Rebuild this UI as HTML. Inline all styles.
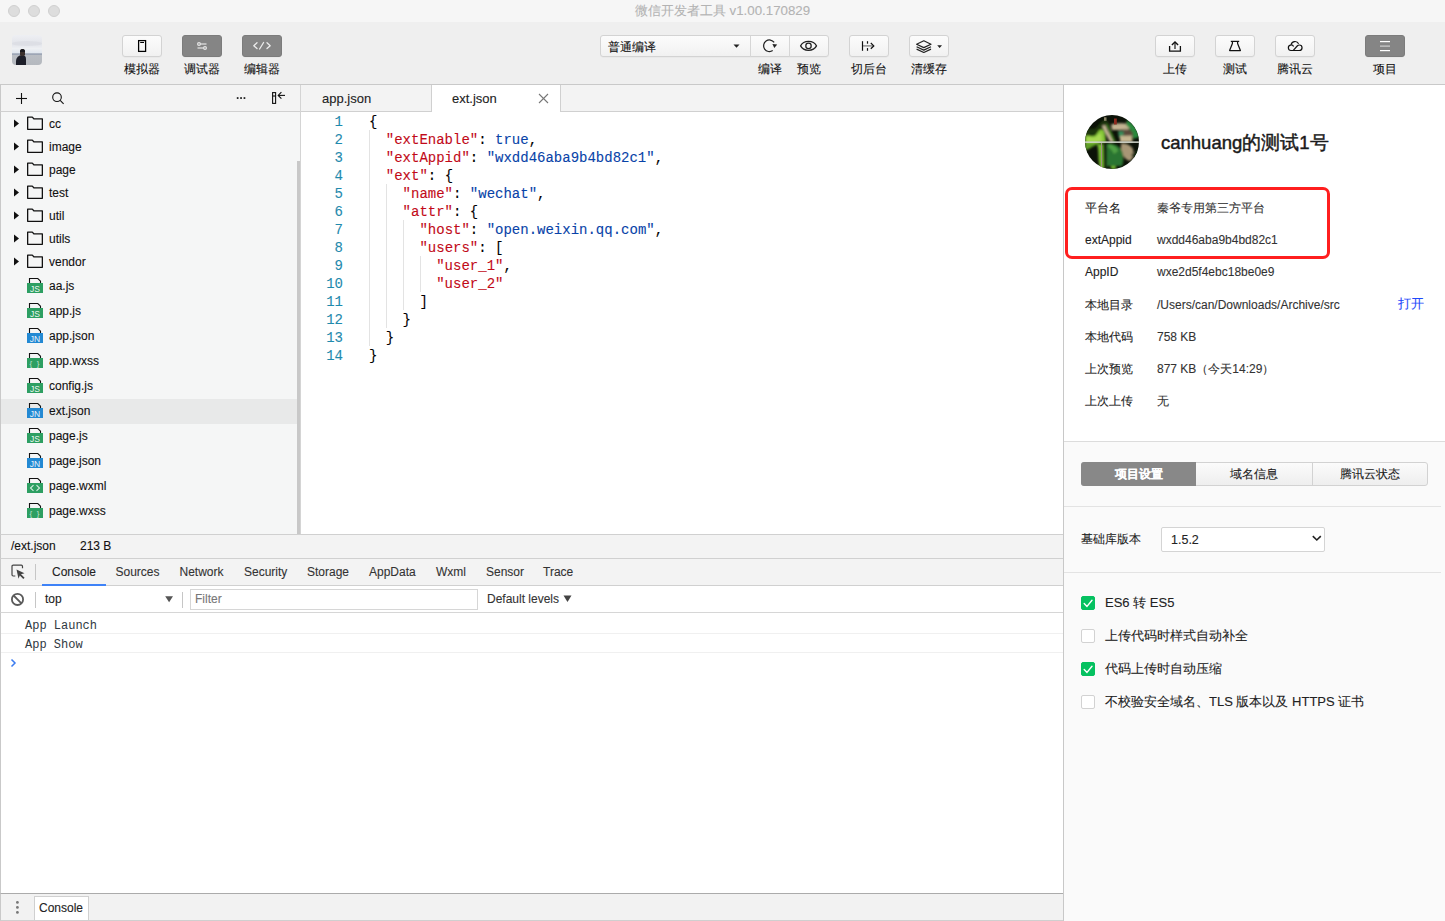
<!DOCTYPE html>
<html><head><meta charset="utf-8">
<style>
*{box-sizing:border-box;margin:0;padding:0}
body{-webkit-text-stroke-width:0.1px}
html,body{width:1445px;height:921px;overflow:hidden;background:#efefef;font-family:"Liberation Sans",sans-serif;color:#222;position:relative}
.a{position:absolute}
#title{left:0;top:0;width:1445px;height:22px;background:#f6f6f6}
.tl{top:5px;width:12px;height:12px;border-radius:50%;background:#dddddd;border:1px solid #d0d0d0}
#ttext{left:0;width:1445px;top:3px;text-align:center;font-size:13.3px;color:#b3b3b3;line-height:16px}
#toolbar{left:0;top:22px;width:1445px;height:63px;background:#efefef;border-bottom:1px solid #c9c9c9}
.btn{top:35px;width:40px;height:22px;border-radius:3px;background:linear-gradient(#fcfcfc,#f1f1f1);border:1px solid #d3d3d3;box-shadow:0 0.5px 0 rgba(0,0,0,.05)}
.btn.dk{background:#858585;border-color:#7c7c7c}
.lbl{top:62px;width:60px;text-align:center;font-size:12px;line-height:14px;color:#111}
#side{left:0;top:85px;width:300px;height:449px;background:#f5f6f6;border-left:1px solid #c9c9c9}
#sidehead{left:0;top:85px;width:300px;height:27px;background:#f3f3f3;border-bottom:1px solid #d0d0d0;border-left:1px solid #c9c9c9}
#editor{left:300px;top:85px;width:763px;height:449px;background:#fff;border-left:1px solid #d4d4d4}
#tabs{left:301px;top:85px;width:762px;height:27px;background:#f3f3f3;border-bottom:1px solid #d0d0d0}
.row{left:1px;width:296px;height:23px;font-size:12.5px;line-height:23px;color:#222}
.tx{font-size:12px;line-height:15px;color:#111;white-space:nowrap}
.dt{top:565px;font-size:12px;line-height:14px;color:#333;white-space:nowrap}
.ctx{font-size:12px;line-height:14px;white-space:nowrap}
.msg{font-family:"Liberation Mono",monospace;font-size:12px;line-height:14px;color:#303942;white-space:pre;-webkit-text-stroke-width:0}
.seg{top:466px;font-size:12px;line-height:16px;text-align:center;color:#222}
.frow{left:1px;width:296px;height:25px;font-size:12.5px;line-height:25px;color:#222}
.code{left:301px;top:113px;width:762px;font-family:"Liberation Mono",monospace;font-size:14px;line-height:18px}
.ln{position:absolute;left:0;width:42px;text-align:right;color:#1f8aad}
.cl{position:absolute;left:68px;white-space:pre;color:#000}
.k{color:#c20a18}.s{color:#0843a8}.b{color:#0843a8}
#status{left:0;top:534px;width:1063px;height:24px;background:#f3f3f3;border-top:1px solid #d0d0d0;border-left:1px solid #c9c9c9;font-size:12px}
#dtabs{left:0;top:558px;width:1063px;height:28px;background:#f3f3f3;border-top:1px solid #d0d0d0;border-bottom:1px solid #d0d0d0;border-left:1px solid #c9c9c9;font-size:12px;color:#333}
#ctool{left:0;top:586px;width:1063px;height:27px;background:#fff;border-bottom:1px solid #d6d6d6;border-left:1px solid #c9c9c9;font-size:12px}
#cmsg{left:0;top:613px;width:1063px;height:280px;background:#fff;border-left:1px solid #c9c9c9}
#drawer{left:0;top:893px;width:1063px;height:28px;background:#f2f2f2;border-top:1px solid #ababab;border-bottom:1px solid #cfcfcf;border-left:1px solid #c9c9c9}
#right{left:1063px;top:85px;width:382px;height:836px;background:#fafafa;border-left:1px solid #c8c8c8}
#rtop{left:1064px;top:85px;width:381px;height:357px;background:#fff;border-bottom:1px solid #dcdcdc}
.il{left:1085px;font-size:12px;line-height:16px;color:#222}
.iv{left:1157px;font-size:12px;line-height:16px;color:#333}
.cb{left:1081px;width:14px;height:14px;border-radius:2px;background:#fff;border:1px solid #d2d2d2}
.cb.on{background:#05c160;border-color:#05c160}
.ct{left:1105px;font-size:13px;line-height:16px;color:#222}
</style></head><body>
<div id="title" class="a"></div>
<div class="a tl" style="left:8px"></div>
<div class="a tl" style="left:28px"></div>
<div class="a tl" style="left:48px"></div>
<div id="ttext" class="a">微信开发者工具 v1.00.170829</div>
<div id="toolbar" class="a"></div>

<!-- avatar -->
<div class="a" style="left:12px;top:35px;width:30px;height:30px;border-radius:4px;overflow:hidden;background:linear-gradient(#eeeff3 0%,#e2e4ea 30%,#eef0f3 45%,#dfe6ee 60%,#a4acbb 62%,#9aa3b3 66%,#b9bdc3 68%,#b4b8be 100%)">
  <div class="a" style="left:0;top:6px;width:30px;height:5px;background:#d9dbe1;opacity:.6;border-radius:50%"></div>
  <div class="a" style="left:3.5px;top:19.5px;width:10.5px;height:12px;background:#1d1f29;border-radius:6px 4px 0 0"></div>
  <div class="a" style="left:7.5px;top:14px;width:5.5px;height:7px;background:#3a302c;border-radius:3px 3px 2px 2px"></div>
  <div class="a" style="left:7.5px;top:13.5px;width:5px;height:3.5px;background:#1a1a1e;border-radius:3px 3px 0 0"></div>
</div>
<div class="a btn" style="left:122px"></div>
<div class="a btn dk" style="left:182px"></div>
<div class="a btn dk" style="left:242px"></div>
<div class="a lbl" style="left:112px">模拟器</div>
<div class="a lbl" style="left:172px">调试器</div>
<div class="a lbl" style="left:232px">编辑器</div>

<!-- compile group -->
<div class="a btn" style="left:600px;width:229px"></div>
<div class="a" style="left:750px;top:36px;width:1px;height:21px;background:#d6d6d6"></div>
<div class="a" style="left:789px;top:36px;width:1px;height:21px;background:#d6d6d6"></div>
<div class="a" style="left:608px;top:40px;font-size:12px;line-height:14px;color:#111">普通编译</div>
<div class="a lbl" style="left:740px">编译</div>
<div class="a lbl" style="left:779px">预览</div>
<div class="a btn" style="left:849px"></div>
<div class="a btn" style="left:909px"></div>
<div class="a lbl" style="left:839px">切后台</div>
<div class="a lbl" style="left:899px">清缓存</div>

<div class="a btn" style="left:1155px"></div>
<div class="a btn" style="left:1215px"></div>
<div class="a btn" style="left:1275px"></div>
<div class="a btn dk" style="left:1365px"></div>
<div class="a lbl" style="left:1145px">上传</div>
<div class="a lbl" style="left:1205px">测试</div>
<div class="a lbl" style="left:1265px">腾讯云</div>
<div class="a lbl" style="left:1355px">项目</div>


<!-- toolbar icons -->
<svg class="a" style="left:0;top:0" width="1445" height="85">
 <g fill="none" stroke="#000" stroke-width="1.25">
  <rect x="138.6" y="40.6" width="7" height="10.8"/>
 </g>
 <rect x="140.2" y="42" width="3.8" height="1" fill="#000"/>
 <g fill="none" stroke="#e6e6e6" stroke-width="1.2">
  <circle cx="199" cy="44" r="1.4"/><line x1="200.4" y1="44" x2="206.5" y2="44"/>
  <circle cx="205" cy="48" r="1.4"/><line x1="197.5" y1="48" x2="203.6" y2="48"/>
 </g>
 <g fill="none" stroke="#ececec" stroke-width="1.3" stroke-linecap="round" stroke-linejoin="round">
  <polyline points="257,42.8 253.8,45.7 257,48.6"/>
  <line x1="263.6" y1="42.5" x2="259.6" y2="49"/>
  <polyline points="267,42.8 270.2,45.7 267,48.6"/>
 </g>
 <!-- refresh -->
 <g fill="none" stroke="#222" stroke-width="1.25">
  <path d="M774.15,42.47 A5.8,5.8 0 1 0 772.7,50.55"/>
 </g>
 <path d="M772.4,44.0 L777.2,44.6 L774.3,47.9 Z" fill="#222"/>
 <!-- eye -->
 <g fill="none" stroke="#222" stroke-width="1.25">
  <path d="M800.6,45.9 C803.5,40 813.5,40 816.5,45.9 C813.5,51.8 803.5,51.8 800.6,45.9 Z"/>
  <circle cx="808.5" cy="45.9" r="2.7"/>
 </g>
 <!-- cut to background -->
 <g fill="none" stroke="#111" stroke-width="1.2">
  <line x1="862.5" y1="41.2" x2="862.5" y2="50.8"/>
  <line x1="867.5" y1="41.2" x2="867.5" y2="43.7"/>
  <line x1="867.5" y1="48.1" x2="867.5" y2="50.8"/>
  <line x1="863" y1="45.9" x2="873.3" y2="45.9" stroke="#777"/>
  <polyline points="870.8,43 873.8,45.9 870.8,48.8"/>
 </g>
 <!-- layers -->
 <g fill="none" stroke="#222" stroke-width="1.2" stroke-linejoin="round">
  <path d="M923.8,40.8 L931,44.2 L923.8,47.6 L916.6,44.2 Z"/>
  <path d="M916.6,46.7 L923.8,50.1 L931,46.7"/>
  <path d="M916.6,49.1 L923.8,52.5 L931,49.1"/>
 </g>
 <path d="M937.2,45.2 L942,45.2 L939.6,48 Z" fill="#222"/>
 <!-- compile caret -->
 <path d="M733.5,44.5 L739.5,44.5 L736.5,47.7 Z" fill="#222"/>
 <!-- upload -->
 <g fill="none" stroke="#111" stroke-width="1.3">
  <polyline points="1169.6,46 1169.6,51.2 1180.4,51.2 1180.4,46"/>
  <line x1="1175" y1="42.5" x2="1175" y2="49" stroke="#444" stroke-width="1.5"/>
 </g>
 <polyline points="1171.9,44.9 1175,41.9 1178.1,44.9" fill="none" stroke="#111" stroke-width="1.4"/>
 <!-- flask -->
 <g fill="none" stroke="#111" stroke-width="1.25" stroke-linejoin="round">
  <line x1="1230.8" y1="41.4" x2="1239.2" y2="41.4"/>
  <path d="M1232.4,41.4 L1232.4,43.6 L1229.6,50.5 L1240.4,50.5 L1237.6,43.6 L1237.6,41.4"/>
 </g>
 <!-- cloud -->
 <g fill="none" stroke="#111" stroke-width="1.2">
  <path d="M1293.6,46.6 A2.75,2.75 0 1 0 1290.9,50.5 L1299.3,50.5 A2.75,2.75 0 0 0 1299.3,45 C1298.5,45 1297.8,45.3 1297.2,46 L1293.3,50.4"/>
  <path d="M1291.1,44.6 A4,4 0 0 1 1298.6,43.8"/>
 </g>
 <!-- hamburger -->
 <rect x="1380" y="41" width="10" height="1.2" fill="#fff"/>
 <rect x="1380" y="45.5" width="10" height="1.2" fill="#d0d0d0"/>
 <rect x="1380" y="50" width="10" height="1.2" fill="#fff"/>
</svg>

<!-- sidebar -->
<div id="side" class="a"></div>
<div id="sidehead" class="a"></div>
<!-- tree -->
<div class="a" style="left:1px;top:399px;width:296px;height:25px;background:#e8e9e9"></div>
<div class="a tx" style="left:49px;top:117px">cc</div>
<div class="a tx" style="left:49px;top:140px">image</div>
<div class="a tx" style="left:49px;top:163px">page</div>
<div class="a tx" style="left:49px;top:186px">test</div>
<div class="a tx" style="left:49px;top:209px">util</div>
<div class="a tx" style="left:49px;top:232px">utils</div>
<div class="a tx" style="left:49px;top:255px">vendor</div>
<div class="a tx" style="left:49px;top:279px">aa.js</div>
<div class="a tx" style="left:49px;top:304px">app.js</div>
<div class="a tx" style="left:49px;top:329px">app.json</div>
<div class="a tx" style="left:49px;top:354px">app.wxss</div>
<div class="a tx" style="left:49px;top:379px">config.js</div>
<div class="a tx" style="left:49px;top:404px">ext.json</div>
<div class="a tx" style="left:49px;top:429px">page.js</div>
<div class="a tx" style="left:49px;top:454px">page.json</div>
<div class="a tx" style="left:49px;top:479px">page.wxml</div>
<div class="a tx" style="left:49px;top:504px">page.wxss</div>
<svg class="a" style="left:0;top:0" width="300" height="534">
<path d="M14,119.5 L19,123.5 L14,127.5 Z" fill="#111"/>
<path d="M27.65,117.15 H32.3 L33.8,118.8 H42.35 V129.35 H27.65 Z" fill="none" stroke="#111" stroke-width="1.3" stroke-linejoin="round"/>
<path d="M14,142.5 L19,146.5 L14,150.5 Z" fill="#111"/>
<path d="M27.65,140.15 H32.3 L33.8,141.8 H42.35 V152.35 H27.65 Z" fill="none" stroke="#111" stroke-width="1.3" stroke-linejoin="round"/>
<path d="M14,165.5 L19,169.5 L14,173.5 Z" fill="#111"/>
<path d="M27.65,163.15 H32.3 L33.8,164.8 H42.35 V175.35 H27.65 Z" fill="none" stroke="#111" stroke-width="1.3" stroke-linejoin="round"/>
<path d="M14,188.5 L19,192.5 L14,196.5 Z" fill="#111"/>
<path d="M27.65,186.15 H32.3 L33.8,187.8 H42.35 V198.35 H27.65 Z" fill="none" stroke="#111" stroke-width="1.3" stroke-linejoin="round"/>
<path d="M14,211.5 L19,215.5 L14,219.5 Z" fill="#111"/>
<path d="M27.65,209.15 H32.3 L33.8,210.8 H42.35 V221.35 H27.65 Z" fill="none" stroke="#111" stroke-width="1.3" stroke-linejoin="round"/>
<path d="M14,234.5 L19,238.5 L14,242.5 Z" fill="#111"/>
<path d="M27.65,232.15 H32.3 L33.8,233.8 H42.35 V244.35 H27.65 Z" fill="none" stroke="#111" stroke-width="1.3" stroke-linejoin="round"/>
<path d="M14,257.5 L19,261.5 L14,265.5 Z" fill="#111"/>
<path d="M27.65,255.15 H32.3 L33.8,256.8 H42.35 V267.35 H27.65 Z" fill="none" stroke="#111" stroke-width="1.3" stroke-linejoin="round"/>
<path d="M29.5,283.0 V278.5 H37.8 L40.5,281.2 V283.0" fill="none" stroke="#111" stroke-width="1.1"/>
<rect x="27" y="283.0" width="16" height="10" fill="#2d9f62"/>
<text x="35" y="291.6" text-anchor="middle" font-family="Liberation Sans" font-size="8.5" fill="#fff" fill-opacity=".92">JS</text>
<path d="M29.5,308.0 V303.5 H37.8 L40.5,306.2 V308.0" fill="none" stroke="#111" stroke-width="1.1"/>
<rect x="27" y="308.0" width="16" height="10" fill="#2d9f62"/>
<text x="35" y="316.6" text-anchor="middle" font-family="Liberation Sans" font-size="8.5" fill="#fff" fill-opacity=".92">JS</text>
<path d="M29.5,333.0 V328.5 H37.8 L40.5,331.2 V333.0" fill="none" stroke="#111" stroke-width="1.1"/>
<rect x="27" y="333.0" width="16" height="10" fill="#2389d3"/>
<text x="35" y="341.6" text-anchor="middle" font-family="Liberation Sans" font-size="8.5" fill="#fff" fill-opacity=".92">JN</text>
<path d="M29.5,358.0 V353.5 H37.8 L40.5,356.2 V358.0" fill="none" stroke="#111" stroke-width="1.1"/>
<rect x="27" y="358.0" width="16" height="10" fill="#2d9f62"/>
<text x="35" y="365.8" text-anchor="middle" font-family="Liberation Sans" font-size="8" fill="#fff" fill-opacity=".7" letter-spacing="1.2">{ }</text>
<path d="M29.5,383.0 V378.5 H37.8 L40.5,381.2 V383.0" fill="none" stroke="#111" stroke-width="1.1"/>
<rect x="27" y="383.0" width="16" height="10" fill="#2d9f62"/>
<text x="35" y="391.6" text-anchor="middle" font-family="Liberation Sans" font-size="8.5" fill="#fff" fill-opacity=".92">JS</text>
<path d="M29.5,408.0 V403.5 H37.8 L40.5,406.2 V408.0" fill="none" stroke="#111" stroke-width="1.1"/>
<rect x="27" y="408.0" width="16" height="10" fill="#2389d3"/>
<text x="35" y="416.6" text-anchor="middle" font-family="Liberation Sans" font-size="8.5" fill="#fff" fill-opacity=".92">JN</text>
<path d="M29.5,433.0 V428.5 H37.8 L40.5,431.2 V433.0" fill="none" stroke="#111" stroke-width="1.1"/>
<rect x="27" y="433.0" width="16" height="10" fill="#2d9f62"/>
<text x="35" y="441.6" text-anchor="middle" font-family="Liberation Sans" font-size="8.5" fill="#fff" fill-opacity=".92">JS</text>
<path d="M29.5,458.0 V453.5 H37.8 L40.5,456.2 V458.0" fill="none" stroke="#111" stroke-width="1.1"/>
<rect x="27" y="458.0" width="16" height="10" fill="#2389d3"/>
<text x="35" y="466.6" text-anchor="middle" font-family="Liberation Sans" font-size="8.5" fill="#fff" fill-opacity=".92">JN</text>
<path d="M29.5,483.0 V478.5 H37.8 L40.5,481.2 V483.0" fill="none" stroke="#111" stroke-width="1.1"/>
<rect x="27" y="483.0" width="16" height="10" fill="#2d9f62"/>
<path d="M33.5,485.2 L30.5,488.0 L33.5,490.8 M36.5,485.2 L39.5,488.0 L36.5,490.8" fill="none" stroke="#fff" stroke-opacity=".8" stroke-width="1.1"/>
<path d="M29.5,508.0 V503.5 H37.8 L40.5,506.2 V508.0" fill="none" stroke="#111" stroke-width="1.1"/>
<rect x="27" y="508.0" width="16" height="10" fill="#2d9f62"/>
<text x="35" y="515.8" text-anchor="middle" font-family="Liberation Sans" font-size="8" fill="#fff" fill-opacity=".7" letter-spacing="1.2">{ }</text>
</svg>
<svg class="a" style="left:0;top:85px" width="300" height="27">
 <g fill="none" stroke="#111" stroke-width="1.1">
  <line x1="16" y1="13.5" x2="27" y2="13.5"/><line x1="21.5" y1="8" x2="21.5" y2="19"/>
  <circle cx="57" cy="12.2" r="4.3"/><line x1="60.2" y1="15.4" x2="63.6" y2="18.8"/>
  <rect x="272.6" y="7.6" width="3" height="10.8"/><line x1="272.6" y1="11" x2="275.6" y2="11"/>
  <polyline points="281.4,7.1 278.2,10.4 281.4,13.7"/><line x1="278.4" y1="10.4" x2="285" y2="10.4"/>
 </g>
 <rect x="236.8" y="12.2" width="1.7" height="1.7" fill="#111"/><rect x="240.2" y="12.2" width="1.7" height="1.7" fill="#111"/><rect x="243.6" y="12.2" width="1.7" height="1.7" fill="#111"/>
</svg>
<div class="a" style="left:297px;top:161px;width:3px;height:373px;background:#c8c8c8"></div>

<div id="editor" class="a"></div>
<div id="tabs" class="a"></div>
<div class="a" style="left:431px;top:85px;width:130px;height:27px;background:#fff;border-left:1px solid #d0d0d0;border-right:1px solid #d0d0d0"></div>
<div class="a" style="left:322px;top:91px;font-size:13px;line-height:15px;color:#222">app.json</div>
<div class="a" style="left:452px;top:91px;font-size:13px;line-height:15px;color:#222">ext.json</div>

<!-- code -->
<div class="a code" style="height:260px">
<div class="ln" style="top:0">1</div><div class="cl" style="top:0">{</div>
<div class="ln" style="top:18px">2</div><div class="cl" style="top:18px">  <span class="k">"extEnable"</span>: <span class="b">true</span>,</div>
<div class="ln" style="top:36px">3</div><div class="cl" style="top:36px">  <span class="k">"extAppid"</span>: <span class="s">"wxdd46aba9b4bd82c1"</span>,</div>
<div class="ln" style="top:54px">4</div><div class="cl" style="top:54px">  <span class="k">"ext"</span>: {</div>
<div class="ln" style="top:72px">5</div><div class="cl" style="top:72px">    <span class="k">"name"</span>: <span class="s">"wechat"</span>,</div>
<div class="ln" style="top:90px">6</div><div class="cl" style="top:90px">    <span class="k">"attr"</span>: {</div>
<div class="ln" style="top:108px">7</div><div class="cl" style="top:108px">      <span class="k">"host"</span>: <span class="s">"open.weixin.qq.com"</span>,</div>
<div class="ln" style="top:126px">8</div><div class="cl" style="top:126px">      <span class="k">"users"</span>: [</div>
<div class="ln" style="top:144px">9</div><div class="cl" style="top:144px">        <span class="k">"user_1"</span>,</div>
<div class="ln" style="top:162px">10</div><div class="cl" style="top:162px">        <span class="k">"user_2"</span></div>
<div class="ln" style="top:180px">11</div><div class="cl" style="top:180px">      ]</div>
<div class="ln" style="top:198px">12</div><div class="cl" style="top:198px">    }</div>
<div class="ln" style="top:216px">13</div><div class="cl" style="top:216px">  }</div>
<div class="ln" style="top:234px">14</div><div class="cl" style="top:234px">}</div>
</div>


<!-- tab close -->
<svg class="a" style="left:536px;top:91px" width="15" height="15"><g stroke="#777" stroke-width="1.1"><line x1="3" y1="3" x2="12" y2="12"/><line x1="12" y1="3" x2="3" y2="12"/></g></svg>
<!-- indent guides -->
<div class="a" style="left:369px;top:130px;width:1px;height:216px;background:#e3e3e3"></div>
<div class="a" style="left:386px;top:184px;width:1px;height:144px;background:#e3e3e3"></div>
<div class="a" style="left:403px;top:220px;width:1px;height:90px;background:#e3e3e3"></div>
<div class="a" style="left:420px;top:256px;width:1px;height:36px;background:#e3e3e3"></div>

<!-- status etc -->
<div id="status" class="a"></div>
<div class="a" style="left:11px;top:539px;font-size:12px;line-height:14px;color:#111">/ext.json</div>
<div class="a" style="left:80px;top:539px;font-size:12px;line-height:14px;color:#111">213 B</div>
<div id="dtabs" class="a"></div>
<div id="ctool" class="a"></div>
<div id="cmsg" class="a"></div>
<div id="drawer" class="a"></div>

<!-- devtools tabs -->
<svg class="a" style="left:0;top:558px" width="60" height="29">
 <path d="M15.3,18 H13.2 Q12,18 12,16.8 V8.4 Q12,7.2 13.2,7.2 H21.3 Q22.5,7.2 22.5,8.4 V10.2" fill="none" stroke="#444" stroke-width="1.2"/>
 <path d="M16.5,11.5 L24.5,15.2 L21,16.2 L24.6,19.8 L23.3,21 L19.8,17.5 L18.5,20.8 Z" fill="#444"/>
 <rect x="35" y="6" width="1" height="16" fill="#c6c6c6"/>
</svg>
<div class="a dt" style="left:52px;color:#222">Console</div>
<div class="a dt" style="left:115.5px">Sources</div>
<div class="a dt" style="left:179.5px">Network</div>
<div class="a dt" style="left:244px">Security</div>
<div class="a dt" style="left:307px">Storage</div>
<div class="a dt" style="left:369px">AppData</div>
<div class="a dt" style="left:436px">Wxml</div>
<div class="a dt" style="left:486px">Sensor</div>
<div class="a dt" style="left:543px">Trace</div>
<div class="a" style="left:42px;top:584px;width:64px;height:2px;background:#3e82f7"></div>
<!-- console toolbar -->
<svg class="a" style="left:0;top:588px" width="200" height="25">
 <circle cx="17.5" cy="11.4" r="5.6" fill="none" stroke="#5a5a5a" stroke-width="1.8"/>
 <line x1="13.6" y1="7.5" x2="21.4" y2="15.3" stroke="#5a5a5a" stroke-width="1.8"/>
 <rect x="35" y="4" width="1" height="16" fill="#c6c6c6"/>
 <path d="M165.2,8.2 L173,8.2 L169.1,14.2 Z" fill="#555"/>
 <rect x="182" y="4" width="1" height="16" fill="#c6c6c6"/>
</svg>
<div class="a ctx" style="left:45px;top:592px;color:#222">top</div>
<div class="a" style="left:190px;top:589px;width:288px;height:21px;border:1px solid #d6d6d6;background:#fff"></div>
<div class="a ctx" style="left:195px;top:592px;color:#777">Filter</div>
<div class="a ctx" style="left:487px;top:592px;color:#333">Default levels</div>
<svg class="a" style="left:562px;top:594px" width="12" height="10"><path d="M1.5,1.5 L9.5,1.5 L5.5,8 Z" fill="#444"/></svg>
<!-- messages -->
<div class="a msg" style="left:25px;top:619px">App Launch</div>
<div class="a" style="left:1px;top:633px;width:1062px;height:1px;background:#f0f0f0"></div>
<div class="a msg" style="left:25px;top:638px">App Show</div>
<div class="a" style="left:1px;top:652px;width:1062px;height:1px;background:#f0f0f0"></div>
<svg class="a" style="left:8px;top:656px" width="12" height="14"><polyline points="3.5,3.5 7,7 3.5,10.5" fill="none" stroke="#3b7cf0" stroke-width="1.5"/></svg>
<!-- drawer -->
<svg class="a" style="left:10px;top:898px" width="16" height="20">
 <circle cx="7.4" cy="4.4" r="1.4" fill="#777"/><circle cx="7.4" cy="9.4" r="1.4" fill="#777"/><circle cx="7.4" cy="14.4" r="1.4" fill="#777"/>
</svg>
<div class="a" style="left:34px;top:896px;width:55px;height:24px;background:#fff;border:1px solid #d0d0d0;border-bottom:none"></div>
<div class="a ctx" style="left:39px;top:901px;font-size:12px;color:#222">Console</div>


<!-- right panel -->
<div id="right" class="a"></div>
<div id="rtop" class="a"></div>

<!-- right content -->
<svg class="a" style="left:1085px;top:114.5px" width="54" height="54" viewBox="0 0 54 54">
 <defs><clipPath id="cc"><circle cx="27" cy="27" r="27"/></clipPath>
 <filter id="bl" x="-10%" y="-10%" width="120%" height="120%"><feGaussianBlur stdDeviation="1"/></filter></defs>
 <g clip-path="url(#cc)">
  <rect width="54" height="54" fill="#0c1208"/>
  <g filter="url(#bl)">
  <path d="M0,14 C5,12 8,16 12,12 C14,8 18,6 20,4 L24,8 C22,14 20,20 22,27 L0,28 Z" fill="#1f3410"/>
  <path d="M0,21 C4,19 7,23 11,20 C13,17 15,13 18,15 C21,18 19,23 21,27 L0,29 Z" fill="#86c838"/>
  <path d="M2,22 C6,21 8,24 11,22 C13,20 14,18 16,19 C17,22 16,25 17,27 L2,27 Z" fill="#b6e060" opacity=".7"/>
  <path d="M0,28 L14,28 C12,30 8,31 4,34 L0,35 Z" fill="#5e9e26"/>
  <path d="M12,29 C14,35 13,42 14,48 L15,54 L19.5,54 C18.5,46 19,38 18,29 Z" fill="#78bc30"/>
  <path d="M18.5,29 L23,29 L23,54 L18.5,54 Z" fill="#13260e"/>
  <path d="M24,36 C26,42 25,48 26,54 L31,54 C30,48 31,42 29,36 Z" fill="#6cb22e"/>
  <path d="M21,10 C24,16 25,21 28,27 L31,27 C28,20 25,13 23,9 Z" fill="#3e7a1e"/>
  <path d="M17,11 C20,16 22,22 25,27 L28.5,27 C25.5,21 22,14 20,10 Z" fill="#c9ba98"/>
  <path d="M26,9.5 C32,8 38,8 44,9 L44.5,14.5 C38,15 32,15 27,15 Z" fill="#c3b392"/>
  <path d="M42,5 C48,8 53,14 54,22 L48,24 C47,18 45,13 41,10 Z" fill="#2b8a3c"/>
  <path d="M33,16 L39,16 L39,23 L34,23 Z" fill="#3b8c5c"/>
  <path d="M38.5,15 C42,14.5 46,15 48,18 L47,22 C44,21 41,21 38.5,22 Z" fill="#5c4a3a"/>
  <path d="M35,21 L47,20.5 L47.5,27 L35,27 Z" fill="#c6b690"/>
  <path d="M36,28.5 C41,28 46,30 48,34 C49,39 48,44 45,46 C41,45 37,41 36,36 Z" fill="#a79676"/>
  <path d="M22,28.5 C28,28.5 33,30 36,34 C39,40 39,46 37,51 L22,51 Z" fill="#2c7530"/>
  <path d="M24,29 C28,29.5 32,32 33,36 L29,39 C27,35 25,33 23,32 Z" fill="#4fa044"/>
  <path d="M46,40 C50,43 52,49 50,54 L54,54 L54,34 Z" fill="#10260f"/>
  </g>
  <rect x="0" y="26.4" width="54" height="1.5" fill="#d2d6cc"/>
  <rect x="16" y="28" width="1" height="26" fill="#9a9480"/>
  <rect x="29" y="3.5" width="2.8" height="6" fill="#8c2a1e"/>
  <rect x="19" y="2.3" width="2.5" height="3.5" fill="#8a8468"/>
 </g>
</svg>
<div class="a" style="left:1161px;top:133px;font-size:18.5px;line-height:20px;color:#1a1a1a;white-space:nowrap;-webkit-text-stroke:0.45px #1a1a1a">canhuang的测试1号</div>
<div class="a" style="left:1065px;top:187px;width:265px;height:72px;border:3px solid #ff1f1f;border-radius:7px"></div>
<div class="a il" style="top:200px">平台名</div><div class="a iv" style="top:200px">秦爷专用第三方平台</div>
<div class="a il" style="top:232px">extAppid</div><div class="a iv" style="top:232px">wxdd46aba9b4bd82c1</div>
<div class="a il" style="top:264px">AppID</div><div class="a iv" style="top:264px">wxe2d5f4ebc18be0e9</div>
<div class="a il" style="top:297px">本地目录</div><div class="a iv" style="top:297px">/Users/can/Downloads/Archive/src</div>
<div class="a" style="left:1398px;top:296px;font-size:13px;line-height:16px;color:#1f48fb">打开</div>
<div class="a il" style="top:329px">本地代码</div><div class="a iv" style="top:329px">758 KB</div>
<div class="a il" style="top:361px">上次预览</div><div class="a iv" style="top:361px">877 KB（今天14:29）</div>
<div class="a il" style="top:393px">上次上传</div><div class="a iv" style="top:393px">无</div>

<div class="a" style="left:1081px;top:462px;width:347px;height:24px;border:1px solid #d2d2d2;border-radius:3px;background:linear-gradient(#fbfbfb,#eeeeee)"></div>
<div class="a" style="left:1081px;top:462px;width:115px;height:24px;border-radius:3px 0 0 3px;background:#888"></div>
<div class="a" style="left:1312px;top:463px;width:1px;height:22px;background:#d2d2d2"></div>
<div class="a seg" style="left:1081px;width:115px;color:#fff;font-weight:bold">项目设置</div>
<div class="a seg" style="left:1196px;width:116px">域名信息</div>
<div class="a seg" style="left:1312px;width:116px">腾讯云状态</div>
<div class="a" style="left:1064px;top:506px;width:377px;height:1px;background:#e3e3e3"></div>
<div class="a" style="left:1081px;top:531px;font-size:12px;line-height:16px;color:#222">基础库版本</div>
<div class="a" style="left:1161px;top:527px;width:164px;height:25px;border:1px solid #d4d4d4;border-radius:2px;background:#fff"></div>
<div class="a" style="left:1171px;top:532px;font-size:12.5px;line-height:16px;color:#222">1.5.2</div>
<svg class="a" style="left:1310px;top:533px" width="14" height="10"><polyline points="2.8,3.2 6.8,7 10.8,3.2" fill="none" stroke="#222" stroke-width="1.6"/></svg>
<div class="a" style="left:1064px;top:572px;width:377px;height:1px;background:#e3e3e3"></div>

<div class="a cb on" style="top:596px"></div>
<div class="a cb" style="top:629px"></div>
<div class="a cb on" style="top:662px"></div>
<div class="a cb" style="top:695px"></div>
<svg class="a" style="left:1081px;top:596px" width="14" height="80">
 <polyline points="3.2,7.6 6,10.4 11,4.2" fill="none" stroke="#fff" stroke-width="1.4" stroke-linejoin="round" stroke-linecap="round"/>
 <polyline points="3.2,73.6 6,76.4 11,70.2" fill="none" stroke="#fff" stroke-width="1.4" stroke-linejoin="round" stroke-linecap="round"/>
</svg>
<div class="a ct" style="top:595px">ES6 转 ES5</div>
<div class="a ct" style="top:628px">上传代码时样式自动补全</div>
<div class="a ct" style="top:661px">代码上传时自动压缩</div>
<div class="a ct" style="top:694px">不校验安全域名、TLS 版本以及 HTTPS 证书</div>

</body></html>
